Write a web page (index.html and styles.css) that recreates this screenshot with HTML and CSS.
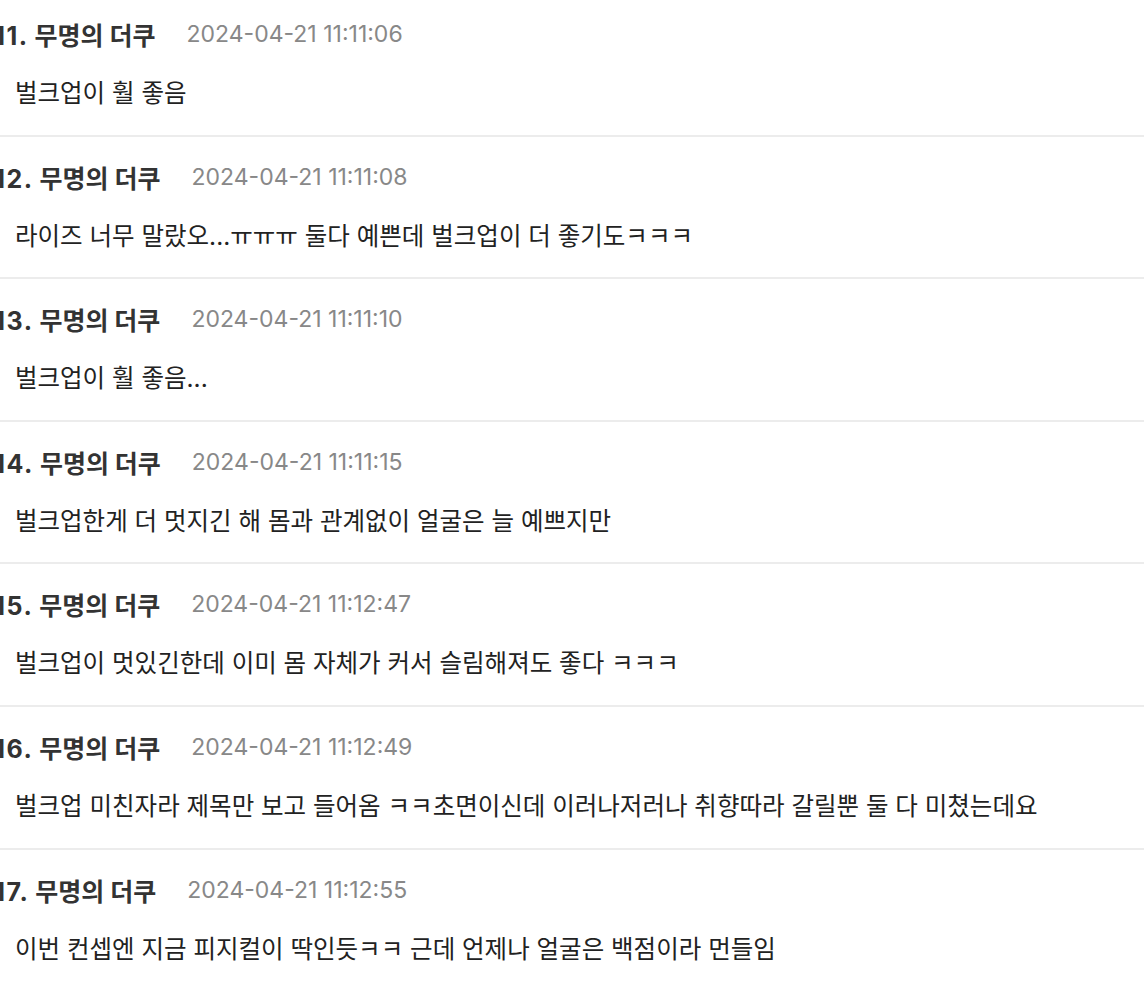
FILE: index.html
```html
<!DOCTYPE html>
<html lang="ko">
<head>
<meta charset="utf-8">
<title>댓글</title>
<link rel="stylesheet" href="styles.css">
</head>
<body>
<ul class="comments">
  <li class="comment">
    <div class="meta"><span class="author"><span class="num">111.</span> 무명의 더쿠</span><span class="date">2024-04-21 11:11:06</span></div>
    <p class="text">벌크업이 훨 좋음</p>
  </li>
  <li class="comment">
    <div class="meta"><span class="author"><span class="num">112.</span> 무명의 더쿠</span><span class="date">2024-04-21 11:11:08</span></div>
    <p class="text">라이즈 너무 말랐오...ㅠㅠㅠ 둘다 예쁜데 벌크업이 더 좋기도ㅋㅋㅋ</p>
  </li>
  <li class="comment">
    <div class="meta"><span class="author"><span class="num">113.</span> 무명의 더쿠</span><span class="date">2024-04-21 11:11:10</span></div>
    <p class="text">벌크업이 훨 좋음...</p>
  </li>
  <li class="comment">
    <div class="meta"><span class="author"><span class="num">114.</span> 무명의 더쿠</span><span class="date">2024-04-21 11:11:15</span></div>
    <p class="text">벌크업한게 더 멋지긴 해 몸과 관계없이 얼굴은 늘 예쁘지만</p>
  </li>
  <li class="comment">
    <div class="meta"><span class="author"><span class="num">115.</span> 무명의 더쿠</span><span class="date">2024-04-21 11:12:47</span></div>
    <p class="text">벌크업이 멋있긴한데 이미 몸 자체가 커서 슬림해져도 좋다 ㅋㅋㅋ</p>
  </li>
  <li class="comment">
    <div class="meta"><span class="author"><span class="num">116.</span> 무명의 더쿠</span><span class="date">2024-04-21 11:12:49</span></div>
    <p class="text">벌크업 미친자라 제목만 보고 들어옴 ㅋㅋ초면이신데 이러나저러나 취향따라 갈릴뿐 둘 다 미쳤는데요</p>
  </li>
  <li class="comment">
    <div class="meta"><span class="author"><span class="num">117.</span> 무명의 더쿠</span><span class="date">2024-04-21 11:12:55</span></div>
    <p class="text">이번 컨셉엔 지금 피지컬이 딱인듯ㅋㅋ 근데 언제나 얼굴은 백점이라 먼들임</p>
  </li>
</ul>
</body>
</html>
```
FILE: styles.css
```css
html, body {
  margin: 0;
  padding: 0;
  background: #fff;
}
body {
  font-family: Inter, "Noto Sans CJK KR", sans-serif;
  color: #222;
  overflow: hidden;
}
.comments {
  list-style: none;
  margin: -6px 0 0 0;
  padding: 0;
}
.comment {
  padding: 20px 0 21.6px 0;
  border-bottom: 2px solid #ececec;
}
.meta {
  display: flex;
  align-items: center;
  gap: 31px;
  height: 40px;
  margin-left: -18px;
  white-space: nowrap;
}
.author {
  font-weight: 700;
  font-size: 25px;
  color: #333;
}
.num {
  letter-spacing: 1.5px;
}
.date {
  font-size: 23px;
  color: #888;
}
.text {
  margin: 19px 0 0 15px;
  height: 40px;
  line-height: 40px;
  font-size: 24.5px;
  color: #222;
  white-space: nowrap;
}
```
